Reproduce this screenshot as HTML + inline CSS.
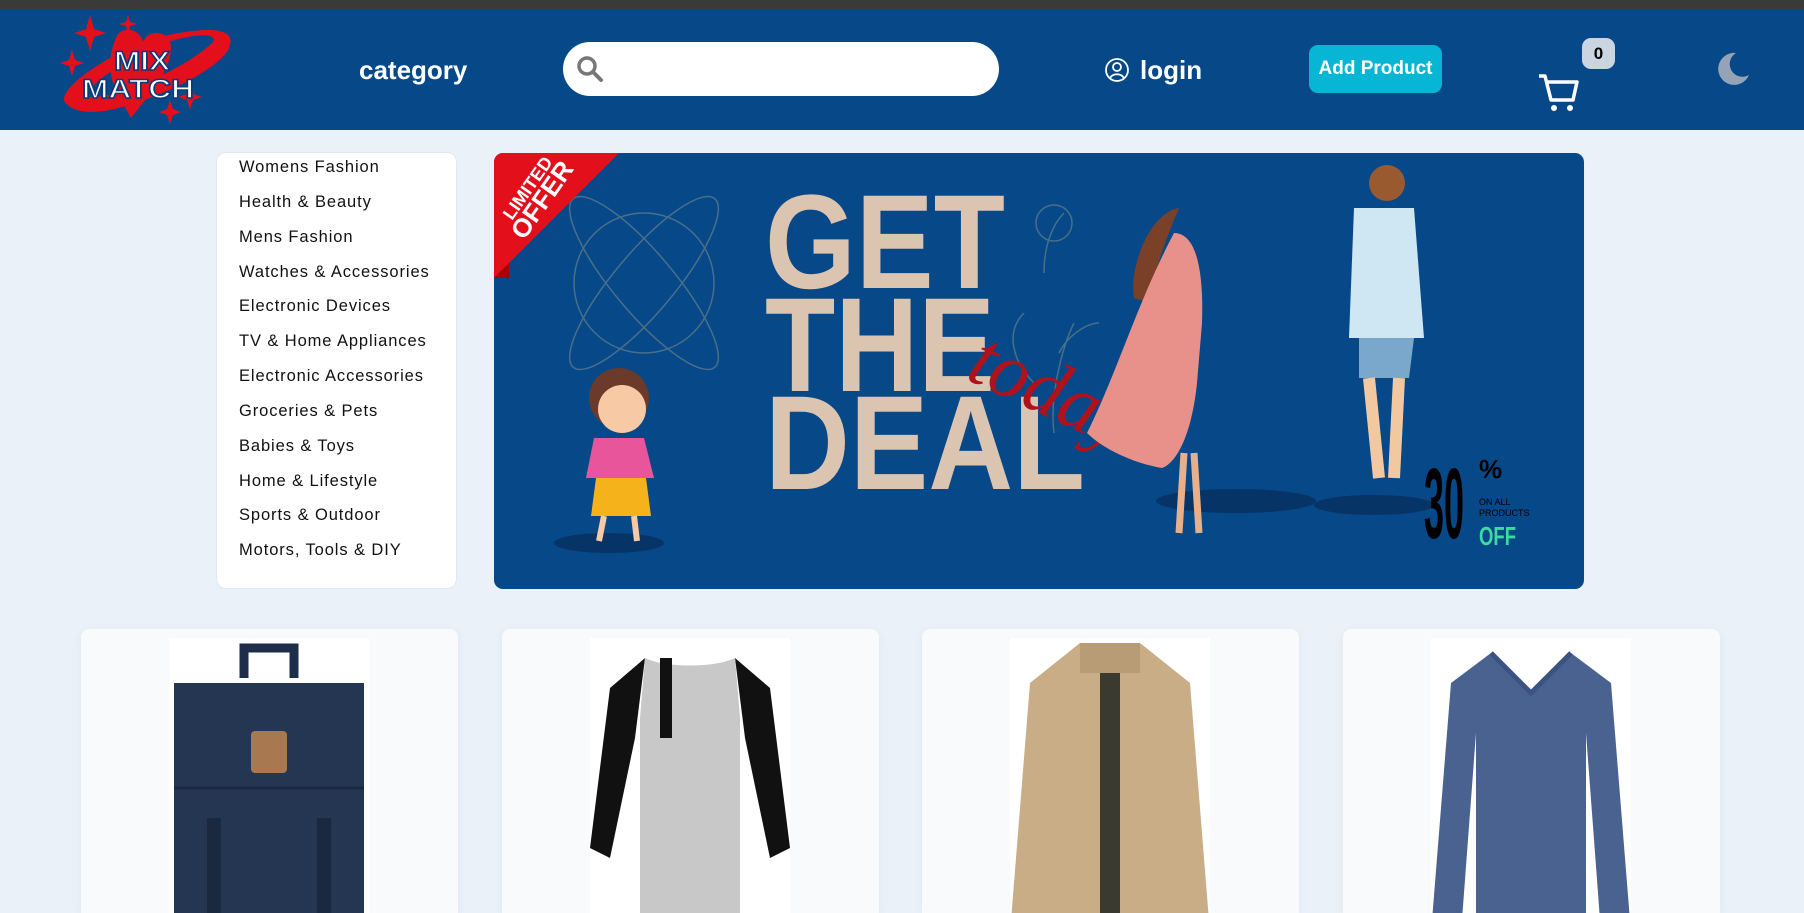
<!DOCTYPE html>
<html style="width:1804px;height:913px;overflow:hidden"><head><meta charset="utf-8"><style>
*{margin:0;padding:0;box-sizing:border-box}
body{width:1804px;height:913px;overflow:hidden;background:#eaf1f9;font-family:"Liberation Sans",sans-serif;position:relative}
.abs{position:absolute}
#top{left:0;top:0;width:1804px;height:9px;background:#3a3a3a}
#hdr{left:0;top:9px;width:1804px;height:121px;background:#074889}
.side{left:216px;top:152px;width:241px;height:437px;background:#fff;border:1px solid #e2e8f0;border-radius:10px}
.side div{position:absolute;left:22px;font-size:16.5px;letter-spacing:.9px;color:#111}
.card{top:629px;width:377px;height:284px;background:#f8fafc;border-radius:8px 8px 0 0;box-shadow:0 2px 10px rgba(0,0,0,.05);overflow:hidden}
.img{position:absolute;left:88px;top:9px;width:200px;height:275px;background:#fff;overflow:hidden}
</style></head><body>
<div class="abs" id="top"></div>
<div class="abs" id="hdr"></div>
<svg class="abs" style="left:60px;top:10px" width="190" height="116" viewBox="0 0 190 116">
<g fill="#e3101c">
<path d="M30 5l4 14 12 4-12 4-4 14-4-14-12-4 12-4z"/>
<path d="M68 4l2 8 7 2-7 2-2 8-2-8-7-2 7-2z"/>
<path d="M12 40l3 10 9 3-9 3-3 10-3-10-9-3 9-3z"/>
<path d="M130 74l3 10 9 3-9 3-3 10-3-10-9-3 9-3z"/>
<path d="M110 90l3 9 8 3-8 3-3 9-3-9-8-3 8-3z"/>
<path d="M55 30c5-16 25-12 28 2c5-14 28-12 28 6c0 24-25 50-40 70c-10-20-30-40-16-78z"/>
<path d="M8 95c-20-10 40-55 100-70c50-10 70-5 60 15c-10 18-60 45-110 58c-30 8-45 2-50-3zm20-8c30 2 100-30 125-55c5-10-20-8-45 0c-40 15-85 45-80 55z"/>
</g>
<text x="82" y="60" text-anchor="middle" font-family="Liberation Sans" font-weight="bold" font-size="27" fill="#fff" stroke="#0a3a7a" stroke-width="1.5" textLength="56" lengthAdjust="spacingAndGlyphs">MIX</text>
<text x="78" y="88" text-anchor="middle" font-family="Liberation Sans" font-weight="bold" font-size="27" fill="#fff" stroke="#0a3a7a" stroke-width="1.5" textLength="112" lengthAdjust="spacingAndGlyphs">MATCH</text>
</svg>
<div class="abs" style="left:359px;top:55px;color:#fff;font-weight:bold;font-size:26px">category</div>
<div class="abs" style="left:563px;top:42px;width:436px;height:54px;background:#fff;border-radius:27px"></div>
<svg class="abs" style="left:575px;top:54px" width="30" height="30" viewBox="0 0 30 30"><circle cx="12" cy="12" r="8" fill="none" stroke="#777" stroke-width="3.5"/><path d="M18 18l8 8" stroke="#777" stroke-width="4" stroke-linecap="round"/></svg>
<svg class="abs" style="left:1105px;top:57px" width="24" height="26" viewBox="0 0 24 26"><circle cx="12" cy="13" r="11" fill="none" stroke="#fff" stroke-width="1.8"/><circle cx="12" cy="10" r="4" fill="none" stroke="#fff" stroke-width="1.8"/><path d="M5 21c3-5 11-5 14 0" fill="none" stroke="#fff" stroke-width="1.8"/></svg>
<div class="abs" style="left:1140px;top:55px;color:#fff;font-weight:bold;font-size:26px">login</div>
<div class="abs" style="left:1309px;top:45px;width:133px;height:48px;background:#06b6d4;border-radius:9px;color:#fff;font-weight:bold;font-size:19px;line-height:48px;text-align:center">Add Product</div>
<svg class="abs" style="left:1537px;top:73px" width="46" height="40" viewBox="0 0 46 40"><path d="M2 3h6l6 24h22l4-18H11" fill="none" stroke="#fff" stroke-width="3.5" stroke-linejoin="round"/><circle cx="17" cy="35" r="3" fill="#fff"/><circle cx="33" cy="35" r="3" fill="#fff"/></svg>
<div class="abs" style="left:1582px;top:38px;width:33px;height:31px;background:#cbd5e1;border-radius:9px;font-weight:bold;font-size:17px;line-height:31px;text-align:center;color:#000">0</div>
<svg class="abs" style="left:1714px;top:50px" width="38" height="38" viewBox="0 0 38 38"><path d="M22 3a16 16 0 1 0 13 22a12 12 0 0 1-13-22z" fill="#94a3b8"/></svg>

<div class="abs side">
<div style="top:5px">Womens Fashion</div><div style="top:40px">Health &amp; Beauty</div><div style="top:75px">Mens Fashion</div><div style="top:110px">Watches &amp; Accessories</div><div style="top:144px">Electronic Devices</div><div style="top:179px">TV &amp; Home Appliances</div><div style="top:214px">Electronic Accessories</div><div style="top:249px">Groceries &amp; Pets</div><div style="top:284px">Babies &amp; Toys</div><div style="top:319px">Home &amp; Lifestyle</div><div style="top:353px">Sports &amp; Outdoor</div><div style="top:388px">Motors, Tools &amp; DIY</div>
</div>

<svg class="abs" style="left:494px;top:153px;border-radius:9px" width="1090" height="436" viewBox="0 0 1090 436">
<rect width="1090" height="436" fill="#074889"/>
<g fill="none" stroke="#5a7a8a" stroke-width="1.5" opacity=".8">
<circle cx="150" cy="130" r="70"/><ellipse cx="150" cy="130" rx="30" ry="110" transform="rotate(-40 150 130)"/><ellipse cx="150" cy="130" rx="30" ry="110" transform="rotate(40 150 130)"/>
<path d="M560 280c-5-40 10-90 20-110M540 230c-20-20-30-50-10-70M565 200c10-20 30-30 40-30M550 120c0-30 10-50 20-60"/><circle cx="560" cy="70" r="18"/>
</g>
<path d="M0 0h125l-125 125z" fill="#e3101c"/><path d="M0 125l15 0 0-15z" fill="#a00"/>
<text x="18" y="68" fill="#fff" font-weight="bold" font-size="18" transform="rotate(-55 18 68)">LIMITED</text>
<text x="30" y="88" fill="#fff" font-weight="bold" font-size="26" transform="rotate(-55 30 88)">OFFER</text>
<g fill="#dcc5b0" font-weight="bold" font-family="Liberation Sans" font-size="134">
<text x="271" y="135" textLength="240" lengthAdjust="spacingAndGlyphs">GET</text>
<text x="271" y="238" textLength="230" lengthAdjust="spacingAndGlyphs">THE</text>
<text x="271" y="336" textLength="320" lengthAdjust="spacingAndGlyphs">DEAL</text>
</g>
<text x="470" y="225" fill="#b0121b" font-family="Liberation Serif" font-style="italic" font-size="80" transform="rotate(25 470 225)" textLength="170" lengthAdjust="spacingAndGlyphs">today</text>
<ellipse cx="115" cy="390" rx="55" ry="10" fill="#063466"/>
<ellipse cx="742" cy="348" rx="80" ry="12" fill="#063466"/><ellipse cx="880" cy="352" rx="60" ry="10" fill="#063466"/>
<circle cx="125" cy="245" r="30" fill="#6b3a2a"/><circle cx="128" cy="256" r="24" fill="#f8c9a5"/>
<path d="M100 285h50l10 40h-68z" fill="#e8559a"/><path d="M102 325h50l5 38h-60z" fill="#f5b21a"/>
<path d="M110 363l-5 25M140 363l3 25" stroke="#f8c9a5" stroke-width="6"/>
<path d="M685 55c-30 5-50 60-45 90l15 5c5-30 15-60 30-95z" fill="#7a4028"/>
<path d="M680 80c20 0 30 30 28 90l-5 60c-5 50-20 80-35 85-30-5-60-20-75-35 30-60 50-130 87-200z" fill="#e8908a"/>
<path d="M690 300l-5 80M700 300l5 80" stroke="#e8b08a" stroke-width="7"/>
<circle cx="893" cy="30" r="18" fill="#9a5a30"/>
<path d="M860 55h60l10 130h-75z" fill="#cfe7f3"/><path d="M865 185h55l-5 40h-50z" fill="#7aa8cc"/>
<path d="M875 225l10 100M905 225l-5 100" stroke="#f2c8a0" stroke-width="12"/>
<text x="930" y="385" font-weight="bold" font-size="100" fill="#000" textLength="40" lengthAdjust="spacingAndGlyphs">30</text>
<text x="985" y="325" font-weight="bold" font-size="26" fill="#000">%</text>
<text x="985" y="352" font-size="9" fill="#000">ON ALL</text><text x="985" y="363" font-size="9" fill="#000">PRODUCTS</text>
<text x="985" y="392" font-weight="bold" font-size="26" fill="#3dd9a0" textLength="37" lengthAdjust="spacingAndGlyphs">OFF</text>
</svg>

<div class="abs card" style="left:81px"><div class="img"><svg width="200" height="300" viewBox="0 0 200 300"><path d="M75 40v-30h50v30" fill="none" stroke="#1e2d4a" stroke-width="9"/><path d="M5 45h190v260H5z" fill="#253653"/><path d="M5 150h190" stroke="#1a2840" stroke-width="3"/><rect x="82" y="93" width="36" height="42" rx="4" fill="#a87850"/><rect x="38" y="180" width="14" height="120" fill="#1a2840"/><rect x="148" y="180" width="14" height="120" fill="#1a2840"/></svg></div></div>
<div class="abs card" style="left:502px"><div class="img"><svg width="200" height="300" viewBox="0 0 200 300"><path d="M55 20l-35 30-20 160 20 10 25-120z" fill="#111"/><path d="M145 20l35 30 20 160-20 10-25-120z" fill="#111"/><path d="M55 20c20 10 70 10 90 0l5 60v230H50V80z" fill="#c8c8c8"/><rect x="70" y="20" width="12" height="80" fill="#111"/></svg></div></div>
<div class="abs card" style="left:922px"><div class="img"><svg width="200" height="300" viewBox="0 0 200 300"><path d="M70 5h60l50 40 20 250H0L20 45z" fill="#c8ad86"/><path d="M90 30h20v280H90z" fill="#3a3a30"/><path d="M70 5h60v30H70z" fill="#b89c76"/></svg></div></div>
<div class="abs card" style="left:1343px"><div class="img"><svg width="200" height="300" viewBox="0 0 200 300"><path d="M60 15l40 40 40-40 40 30 20 250h-30l-15-200v210H45V95L30 295H0L20 45z" fill="#4a6290"/><path d="M60 15l40 40 40-40" fill="none" stroke="#3c5280" stroke-width="5"/></svg></div></div>
</body></html>
